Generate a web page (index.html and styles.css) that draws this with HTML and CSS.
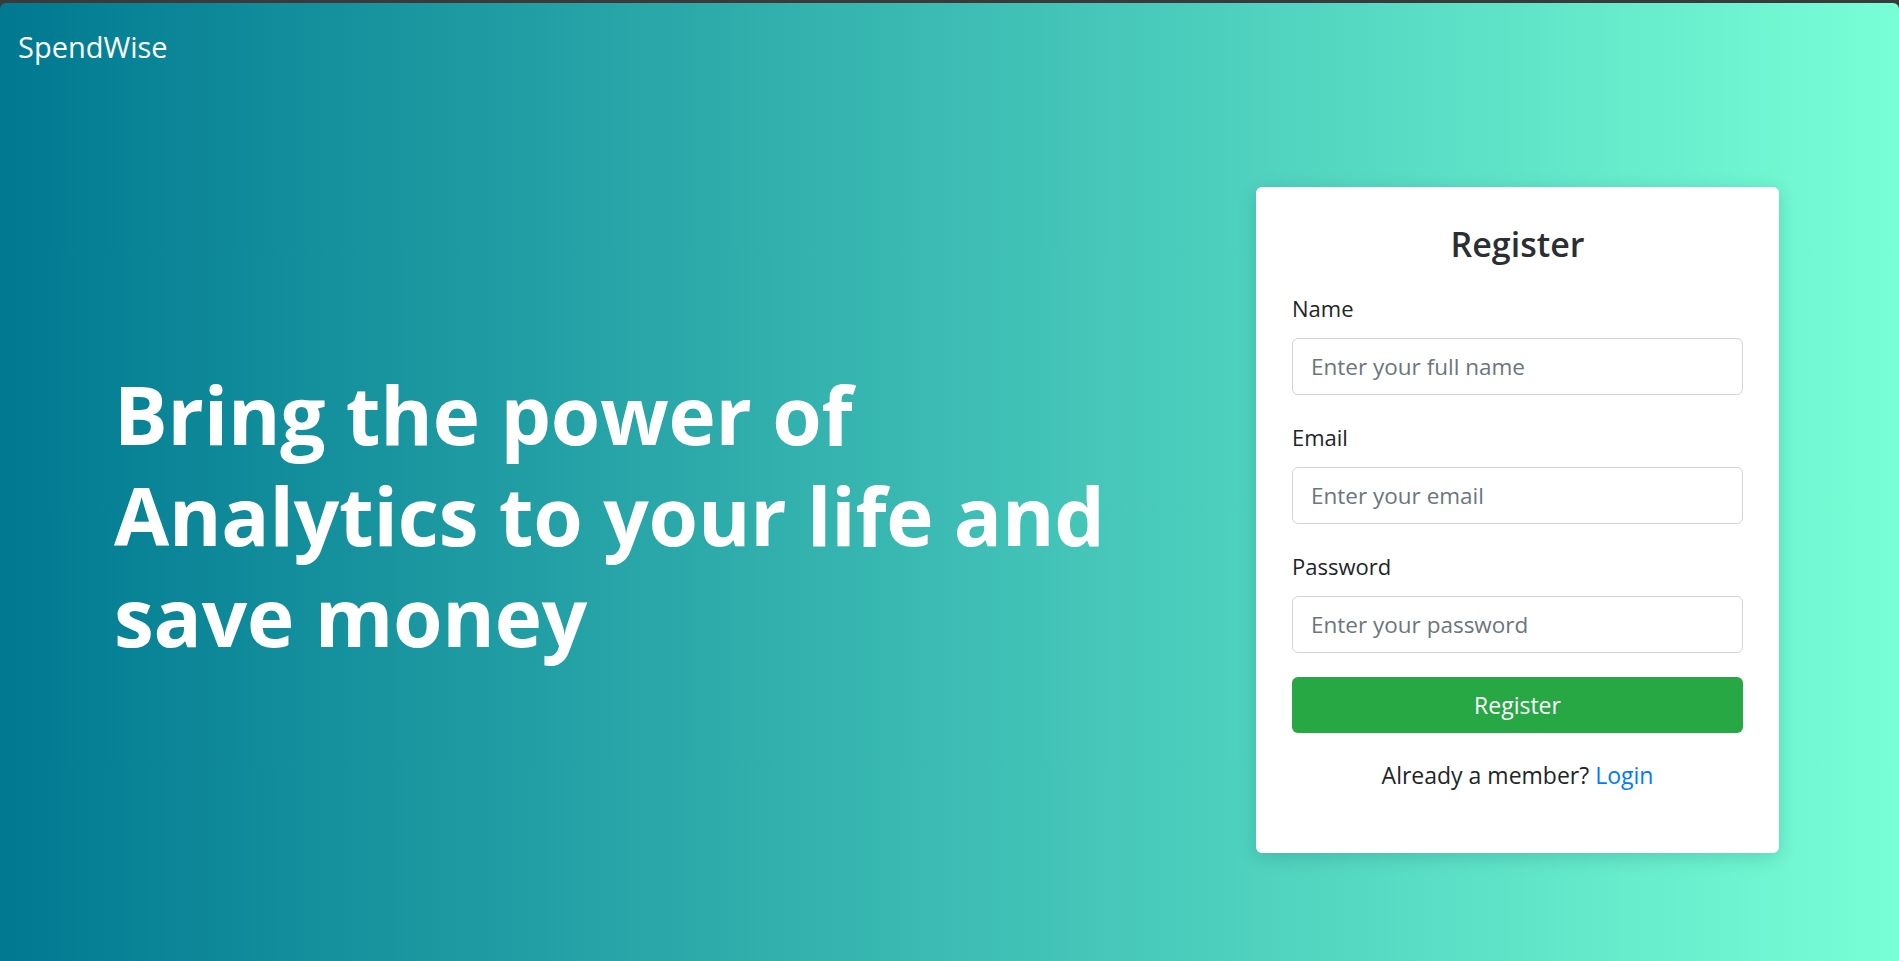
FILE: index.html
```html
<!DOCTYPE html>
<html lang="en">
<head>
<meta charset="utf-8">
<title>SpendWise - Register</title>
<link rel="stylesheet" href="styles.css">
</head>
<body>
<div class="frame">
  <nav class="navbar">
    <a class="brand" href="#">SpendWise</a>
  </nav>
  <main class="hero">
    <section class="hero-text">
      <h1 class="headline">Bring the power of<br>Analytics to your life and<br>save money</h1>
    </section>
    <section class="card">
      <h4 class="card-title">Register</h4>
      <form class="form">
        <div class="form-group">
          <label class="label" for="name">Name</label>
          <input class="input" id="name" type="text" placeholder="Enter your full name">
        </div>
        <div class="form-group">
          <label class="label" for="email">Email</label>
          <input class="input" id="email" type="email" placeholder="Enter your email">
        </div>
        <div class="form-group">
          <label class="label" for="password">Password</label>
          <input class="input" id="password" type="password" placeholder="Enter your password">
        </div>
        <button class="btn-register" type="button">Register</button>
      </form>
      <p class="member">Already a member? <a class="link" href="#">Login</a></p>
    </section>
  </main>
</div>
</body>
</html>
```

FILE: styles.css
```css
* {
  box-sizing: border-box;
}

html, body {
  margin: 0;
  padding: 0;
  height: 100%;
}

body {
  background: #3a3a3a;
  font-family: "Open Sans", "Noto Sans", "Liberation Sans", sans-serif;
  font-size: 24px;
  line-height: 1.5;
  color: #212529;
  overflow: hidden;
}

.frame {
  margin-top: 3px;
  height: calc(100% - 3px);
  border-radius: 6px 6px 0 0;
  background: linear-gradient(to right, #007991, #78ffd6);
  display: flex;
  flex-direction: column;
}

.navbar {
  padding: 21px 16px 9px 18px;
  height: 75px;
  flex: none;
}

.brand {
  color: #ffffff;
  text-decoration: none;
  font-size: 29px;
  line-height: 45px;
  display: inline-block;
}

.hero {
  flex: 1;
  display: flex;
  align-items: center;
  justify-content: space-between;
  padding: 0 120px 0 114px;
}

.headline {
  margin: 0 0 10px;
  color: #ffffff;
  font-size: 80px;
  line-height: 101px;
  font-weight: 700;
  letter-spacing: -0.2px;
}

.card {
  width: 523px;
  background: #ffffff;
  border-radius: 6px;
  padding: 36px;
  box-shadow: 0 4px 18px rgba(0, 60, 60, 0.18);
}

.card-title {
  margin: 0 0 24px;
  text-align: center;
  font-size: 34px;
  line-height: 43px;
  font-weight: 600;
  color: #2b2f33;
}

.form-group {
  margin-bottom: 24px;
}

.label {
  display: block;
  font-size: 22px;
  line-height: 36px;
  margin-bottom: 12px;
}

.input {
  display: block;
  width: 100%;
  height: 57px;
  padding: 9px 18px;
  font-family: inherit;
  font-size: 22.5px;
  color: #495057;
  background: #ffffff;
  border: 1px solid #ced4da;
  border-radius: 6px;
  outline: none;
}

.input::placeholder {
  color: #6c757d;
  opacity: 1;
}

.btn-register {
  display: block;
  width: 100%;
  height: 56px;
  background: #28a745;
  color: #ffffff;
  border: none;
  border-radius: 6px;
  font-family: inherit;
  font-size: 23px;
  line-height: 36px;
  cursor: pointer;
}

.member {
  margin: 24px 0 24px;
  text-align: center;
  font-size: 23px;
  line-height: 36px;
}

.link {
  color: #007bff;
  text-decoration: none;
}
```
